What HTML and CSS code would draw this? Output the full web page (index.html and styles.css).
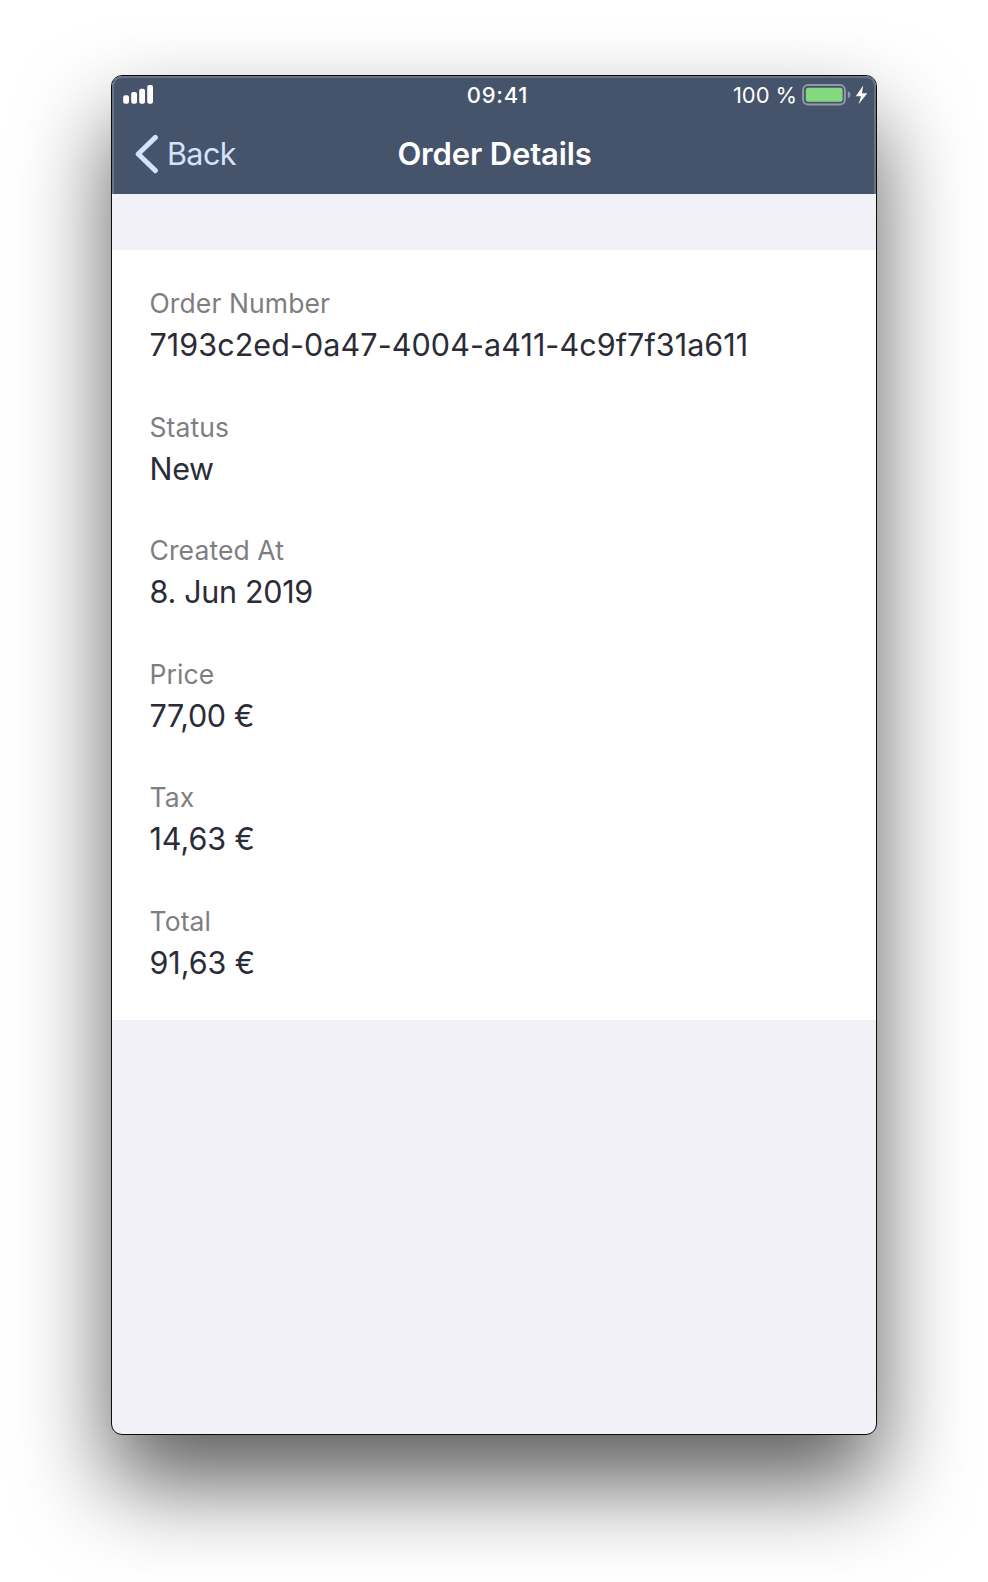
FILE: index.html
```html
<!DOCTYPE html>
<html lang="en">
<head>
<meta charset="utf-8">
<title>Order Details</title>
<link rel="stylesheet" href="styles.css">
</head>
<body>
<main class="window">
  <header class="header">
    <div class="status-bar">
      <svg class="signal" width="32" height="20" viewBox="0 0 32 20" fill="#fff">
        <rect x="0.200" y="10.2" width="5.8" height="8.600" rx="2"/>
        <rect x="8.200" y="7" width="5.8" height="11.800" rx="2"/>
        <rect x="16.200" y="3.800" width="5.8" height="15" rx="2"/>
        <rect x="24.200" y="0" width="5.8" height="18.800" rx="2"/>
      </svg>
      <span class="time">09:41</span>
      <div class="power">
        <span class="percent">100 %</span>
        <svg class="battery" width="66" height="22" viewBox="0 0 66 22">
          <rect x="1.1" y="1.1" width="41.8" height="19.4" rx="4.8" fill="none" stroke="#9299a7" stroke-width="2"/>
          <rect x="3.8" y="3.8" width="36.8" height="14" rx="2.4" fill="#84d97f"/>
          <path d="M45.8 7.2c1.7.6 2.6 1.8 2.6 3.6s-.9 3-2.6 3.600z" fill="#9299a7"/>
          <path d="M61.200 1.500 53.700 12.200h5.300L56.600 20.300 65.300 9.200h-5.400z" fill="#fff"/>
        </svg>
      </div>
    </div>
    <nav class="nav-bar">
      <a class="back">
        <svg width="24" height="40" viewBox="0 0 24 40" fill="none" stroke="#d3e3fc" stroke-width="5" stroke-linecap="round" stroke-linejoin="round"><path d="M20.400 3.400 3.200 20l17.200 16.600"/></svg>
        <span>Back</span>
      </a>
      <h1 class="title">Order Details</h1>
    </nav>
  </header>
  <dl class="details">
    <div class="field"><dt>Order Number</dt><dd class="order-id">7193c2ed-0a47-4004-a411-4c9f7f31a611</dd></div>
    <div class="field"><dt>Status</dt><dd class="tight">New</dd></div>
    <div class="field"><dt>Created At</dt><dd class="tight">8. Jun 2019</dd></div>
    <div class="field"><dt>Price</dt><dd class="tight">77,00 €</dd></div>
    <div class="field"><dt>Tax</dt><dd>14,63 €</dd></div>
    <div class="field"><dt>Total</dt><dd>91,63 €</dd></div>
  </dl>
</main>
</body>
</html>
```

FILE: styles.css
```css
* { box-sizing: border-box; }
body {
  margin: 0;
  height: 1582px;
  padding: 75px 111px 0;
  background: #fff;
  font-family: Inter, "Liberation Sans", sans-serif;
  overflow: hidden;
}
.window {
  width: 766px;
  height: 1360px;
  border: 1px solid #0b0b0b;
  border-radius: 11px;
  background: #f2f1f7;
  overflow: hidden;
  box-shadow: 0 48px 90px rgba(0, 0, 0, .64);
}
.header {
  height: 118px;
  background: #45536b;
  color: #fff;
  border-radius: 10px 10px 0 0;
  box-shadow: inset 0 2px 0 #687388, inset 2px 0 0 #687388, inset -2px 0 0 #687388;
}
.status-bar {
  display: grid;
  grid-template-columns: 1fr auto 1fr;
  align-items: center;
  height: 38px;
  padding: 0 8px 0 11px;
}
.signal { margin-top: -1px; }
.time {
  font-size: 22px;
  font-weight: 500;
  letter-spacing: .75px;
  padding-left: 4px;
}
.power {
  display: flex;
  justify-content: flex-end;
  align-items: center;
  gap: 5px;
}
.percent { font-size: 22px; letter-spacing: -.1px; white-space: nowrap; }
.battery { margin-top: -1px; }
.nav-bar {
  display: grid;
  grid-template-columns: 1fr auto 1fr;
  align-items: center;
  height: 78px;
  padding-left: 23px;
}
.back {
  display: flex;
  align-items: center;
  gap: 8px;
  color: #d3e3fc;
  font-size: 30.500px;
  letter-spacing: -.6px;
}
.back svg { position: relative; top: 1px; }
.title { margin: 0; padding-right: 22px; font-size: 31px; font-weight: 600; letter-spacing: -.15px; }
.details {
  height: 770px;
  margin: 56px 0 0;
  padding: 35px 37.500px 0;
  background: #fff;
}
.field { height: 123.600px; }
dt { color: #7e7e81; font-size: 26.500px; line-height: 36px; letter-spacing: .1px; }
dd { margin: 0; color: #2b2c37; font-size: 30.500px; line-height: 47px; letter-spacing: -.05px; white-space: nowrap; }
.order-id { letter-spacing: .07px; }
.tight { letter-spacing: -.3px; }
```
